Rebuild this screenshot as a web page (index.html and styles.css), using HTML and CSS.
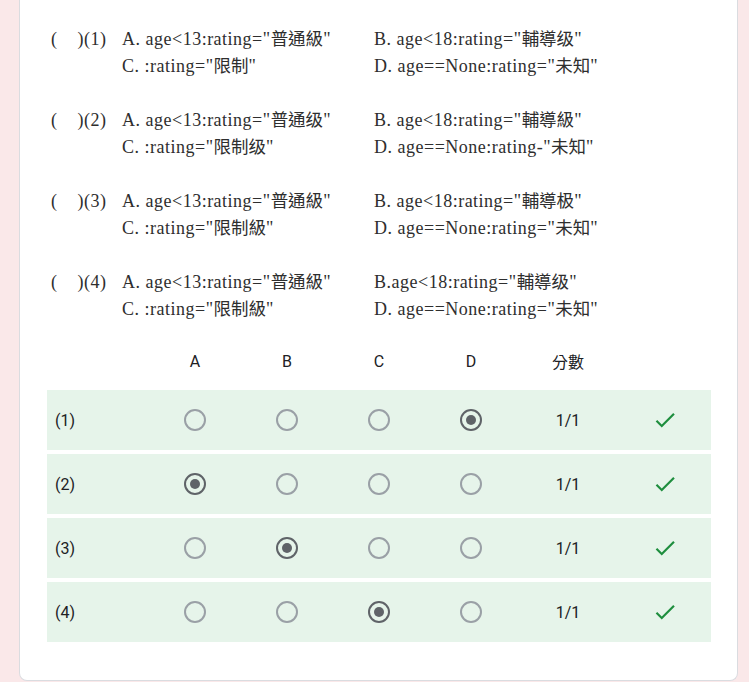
FILE: index.html
```html
<!DOCTYPE html>
<html lang="zh-Hant">
<head>
<meta charset="utf-8">
<title>Quiz result</title>
<link rel="stylesheet" href="styles.css">
</head>
<body>
<div class="card">
  <div class="questions">
    <div class="q">
      <div class="qno">(    )(1)</div>
      <div class="opts">
        <div class="opt">A. age&lt;13:rating="<span class="cjk">普通級</span>"</div>
        <div class="opt">B. age&lt;18:rating="<span class="cjk">輔導级</span>"</div>
        <div class="opt">C. :rating="<span class="cjk">限制</span>"</div>
        <div class="opt">D. age==None:rating="<span class="cjk">未知</span>"</div>
      </div>
    </div>
    <div class="q">
      <div class="qno">(    )(2)</div>
      <div class="opts">
        <div class="opt">A. age&lt;13:rating="<span class="cjk">普通级</span>"</div>
        <div class="opt">B. age&lt;18:rating="<span class="cjk">輔導級</span>"</div>
        <div class="opt">C. :rating="<span class="cjk">限制级</span>"</div>
        <div class="opt">D. age==None:rating-"<span class="cjk">未知</span>"</div>
      </div>
    </div>
    <div class="q">
      <div class="qno">(    )(3)</div>
      <div class="opts">
        <div class="opt">A. age&lt;13:rating="<span class="cjk">普通級</span>"</div>
        <div class="opt">B. age&lt;18:rating="<span class="cjk">輔導极</span>"</div>
        <div class="opt">C. :rating="<span class="cjk">限制級</span>"</div>
        <div class="opt">D. age==None:rating="<span class="cjk">未知</span>"</div>
      </div>
    </div>
    <div class="q">
      <div class="qno">(    )(4)</div>
      <div class="opts">
        <div class="opt">A. age&lt;13:rating="<span class="cjk">普通級</span>"</div>
        <div class="opt">B.age&lt;18:rating="<span class="cjk">輔導级</span>"</div>
        <div class="opt">C. :rating="<span class="cjk">限制級</span>"</div>
        <div class="opt">D. age==None:rating="<span class="cjk">未知</span>"</div>
      </div>
    </div>
  </div>

  <div class="grid">
    <div class="ghead">
      <div></div>
      <div class="cell">A</div>
      <div class="cell">B</div>
      <div class="cell">C</div>
      <div class="cell">D</div>
      <div class="cell">分數</div>
      <div></div>
    </div>
    <div class="grow">
      <div class="label">(1)</div>
      <div class="cell"><span class="radio"></span></div>
      <div class="cell"><span class="radio"></span></div>
      <div class="cell"><span class="radio"></span></div>
      <div class="cell"><span class="radio on"></span></div>
      <div class="cell">1/1</div>
      <div class="cell"><svg class="check" viewBox="0 0 24 24"><path d="M9 16.17L4.83 12l-1.42 1.41L9 19 21 7l-1.41-1.41z"/></svg></div>
    </div>
    <div class="grow">
      <div class="label">(2)</div>
      <div class="cell"><span class="radio on"></span></div>
      <div class="cell"><span class="radio"></span></div>
      <div class="cell"><span class="radio"></span></div>
      <div class="cell"><span class="radio"></span></div>
      <div class="cell">1/1</div>
      <div class="cell"><svg class="check" viewBox="0 0 24 24"><path d="M9 16.17L4.83 12l-1.42 1.41L9 19 21 7l-1.41-1.41z"/></svg></div>
    </div>
    <div class="grow">
      <div class="label">(3)</div>
      <div class="cell"><span class="radio"></span></div>
      <div class="cell"><span class="radio on"></span></div>
      <div class="cell"><span class="radio"></span></div>
      <div class="cell"><span class="radio"></span></div>
      <div class="cell">1/1</div>
      <div class="cell"><svg class="check" viewBox="0 0 24 24"><path d="M9 16.17L4.83 12l-1.42 1.41L9 19 21 7l-1.41-1.41z"/></svg></div>
    </div>
    <div class="grow">
      <div class="label">(4)</div>
      <div class="cell"><span class="radio"></span></div>
      <div class="cell"><span class="radio"></span></div>
      <div class="cell"><span class="radio on"></span></div>
      <div class="cell"><span class="radio"></span></div>
      <div class="cell">1/1</div>
      <div class="cell"><svg class="check" viewBox="0 0 24 24"><path d="M9 16.17L4.83 12l-1.42 1.41L9 19 21 7l-1.41-1.41z"/></svg></div>
    </div>
  </div>
</div>
</body>
</html>
```

FILE: styles.css
```css
html, body {
  margin: 0;
  padding: 0;
}
body {
  background: #fae8e9;
  height: 682px;
  overflow: hidden;
}
.card {
  box-sizing: border-box;
  margin-left: 19px;
  width: 719px;
  height: 681px;
  background: #fff;
  border: 1px solid #dadce0;
  border-top: none;
  border-radius: 0 0 8px 8px;
  padding: 0 26px 0 27px;
}
.questions {
  padding-top: 26px;
  font-family: "Liberation Serif", "Noto Sans CJK TC", serif;
  font-size: 18px;
  letter-spacing: 0.5px;
  color: #2e2e2e;
}
.q {
  display: flex;
  margin-bottom: 27px;
}
.q:last-child {
  margin-bottom: 0;
}
.qno {
  width: 75px;
  padding-left: 4px;
  box-sizing: border-box;
  height: 27px;
  line-height: 27px;
  white-space: pre;
}
.opts {
  display: grid;
  grid-template-columns: 252px auto;
}
.opt {
  height: 27px;
  line-height: 27px;
  white-space: nowrap;
}
.cjk {
  font-family: "Noto Sans CJK TC", sans-serif;
  font-size: 17.5px;
  letter-spacing: 0;
  line-height: 1;
}
.grid {
  margin-top: 13px;
  font-family: Roboto, "Noto Sans CJK TC", sans-serif;
  font-size: 16px;
  color: #202124;
}
.ghead, .grow {
  display: grid;
  grid-template-columns: 102px 92px 92px 92px 92px 102px 92px;
  align-items: center;
}
.ghead {
  height: 50px;
}
.grow {
  height: 60px;
  margin-top: 4px;
  background: #e6f4ea;
}
.label {
  padding-left: 8px;
}
.cell {
  display: flex;
  justify-content: center;
  align-items: center;
}
.radio {
  box-sizing: border-box;
  width: 22px;
  height: 22px;
  border: 2px solid #9aa0a6;
  border-radius: 50%;
  display: flex;
  align-items: center;
  justify-content: center;
}
.radio.on {
  border-color: #5f6368;
}
.radio.on::after {
  content: "";
  width: 10px;
  height: 10px;
  border-radius: 50%;
  background: #5f6368;
}
.check {
  width: 26px;
  height: 26px;
  fill: #1e8e3e;
}
```
